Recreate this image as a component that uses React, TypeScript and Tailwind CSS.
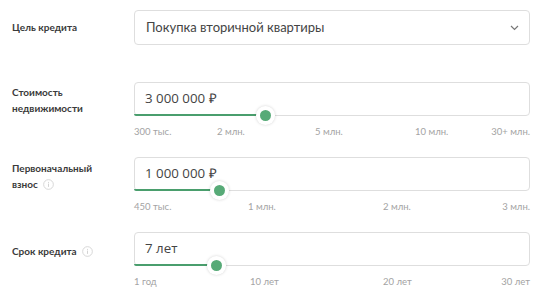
import React from 'react';

type Tick = { text: string; slot: string };

type Slider = {
  label: React.ReactNode;
  value: string;
  percent: number;
  ticks: Tick[];
  labelPad: string;
};

const InfoIcon = () => (
  <svg width="11" height="11" viewBox="0 0 12 12" className="inline-block ml-[5px] -mt-[2px] align-middle">
    <circle cx="6" cy="6" r="5.3" fill="none" stroke="#d4d4d4" strokeWidth="1" />
    <rect x="5.5" y="5" width="1" height="3.6" fill="#cfcfcf" />
    <rect x="5.5" y="3.2" width="1" height="1" fill="#cfcfcf" />
  </svg>
);

const sliders: Slider[] = [
  {
    label: (
      <>
        Стоимость
        <br />
        недвижимости
      </>
    ),
    value: '3 000 000 ₽',
    percent: 33,
    ticks: [
      { text: '300 тыс.', slot: 'w-[83px]' },
      { text: '2 млн.', slot: 'w-[98px]' },
      { text: '5 млн.', slot: 'w-[100px]' },
      { text: '10 млн.', slot: 'flex-1' },
      { text: '30+ млн.', slot: '' },
    ],
    labelPad: 'pt-[2px]',
  },
  {
    label: (
      <>
        Первоначальный
        <br />
        взнос
        <InfoIcon />
      </>
    ),
    value: '1 000 000 ₽',
    percent: 21.5,
    ticks: [
      { text: '450 тыс.', slot: 'w-[114px]' },
      { text: '1 млн.', slot: 'w-[135px]' },
      { text: '2 млн.', slot: 'flex-1' },
      { text: '3 млн.', slot: '' },
    ],
    labelPad: 'pt-[3px]',
  },
  {
    label: (
      <>
        Срок кредита
        <InfoIcon />
      </>
    ),
    value: '7 лет',
    percent: 20.8,
    ticks: [
      { text: '1 год', slot: 'w-[116px]' },
      { text: '10 лет', slot: 'w-[133px]' },
      { text: '20 лет', slot: 'flex-1' },
      { text: '30 лет', slot: '' },
    ],
    labelPad: 'pt-[11px]',
  },
];

const App: React.FC = () => {
  return (
    <div className="w-[540px] h-[299px] bg-white font-['Lato',sans-serif] pl-3 pr-[10px] pt-[10px] text-[#333]">
      <div className="flex items-center">
        <div className="w-[122px] text-[10px] font-bold text-[#3a3a3a]">Цель кредита</div>
        <div className="flex-1 h-[35px] border border-[#dedede] rounded-[4px] flex items-center justify-between pl-[11px] pr-[10px]">
          <span className="text-[13px] text-[#444]">Покупка вторичной квартиры</span>
          <svg width="9" height="6" viewBox="0 0 9 6">
            <path d="M1 1 L4.5 4.5 L8 1" fill="none" stroke="#777" strokeWidth="1.2" />
          </svg>
        </div>
      </div>

      <div className="flex flex-col gap-[19px] mt-[37px]">
        {sliders.map((s, i) => (
          <div key={i} className="flex">
            <div className={`w-[122px] text-[10px] leading-[16px] font-bold text-[#3a3a3a] ${s.labelPad}`}>
              {s.label}
            </div>
            <div className="flex-1">
              <div className="relative h-[34px] border border-[#dedede] rounded-[4px] flex items-center pl-[10px]">
                <span className="font-['Open_Sans',sans-serif] text-[13.3px] text-[#444]">{s.value}</span>
                <div
                  className="absolute left-[-1px] bottom-[-1px] h-[2.5px] bg-[#4a9e6d] rounded-bl-[4px]"
                  style={{ width: `${s.percent}%` }}
                />
                <div
                  className="absolute bottom-[-10px] w-[19px] h-[19px] -ml-[9.5px] rounded-full bg-white shadow-[0_0_3px_rgba(0,0,0,0.18)] flex items-center justify-center"
                  style={{ left: `${s.percent}%` }}
                >
                  <div className="w-[11px] h-[11px] rounded-full bg-[#57aa77]" />
                </div>
              </div>
              <div className="flex mt-[10px] text-[9.5px] leading-[12px] text-[#a3a3a3]">
                {s.ticks.map((t) => (
                  <span key={t.text} className={t.slot}>
                    {t.text}
                  </span>
                ))}
              </div>
            </div>
          </div>
        ))}
      </div>
    </div>
  );
};

export default App;
